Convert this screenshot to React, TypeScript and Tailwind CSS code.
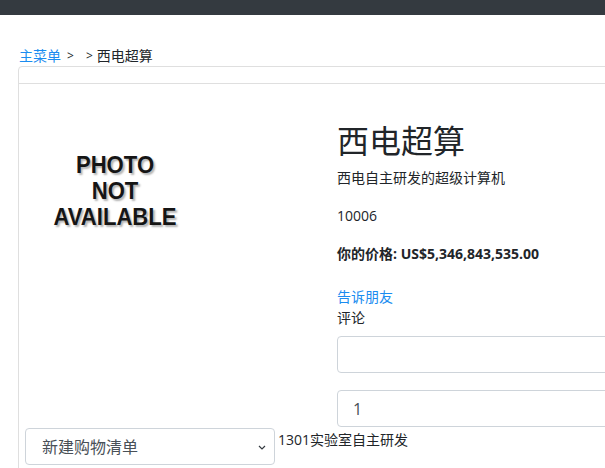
export default function App() {
  return (
    <div
      className="relative h-[468px] w-[605px] overflow-hidden bg-white text-[14px] text-[#212529]"
      style={{ fontFamily: '"Open Sans", "Noto Sans CJK SC", sans-serif' }}
    >
      <div className="h-[15px] bg-[#343a40]" />

      <nav className="mt-[30px] flex h-[21px] items-center whitespace-nowrap pl-[19px] leading-[21px]">
        <a className="text-[#1a8cf0]">主菜单</a>
        <span className="ml-[6px] text-[12px]">&gt;</span>
        <span className="ml-[12px] text-[12px]">&gt;</span>
        <span className="ml-[4px]">西电超算</span>
      </nav>

      <div className="ml-[18px] w-[760px] rounded-[4px] border border-[#dfdfdf]">
        <div className="h-[17px] border-b border-[#dfdfdf]" />

        <div className="flex">
          <div className="w-[318px] shrink-0">
            <div
              className="ml-[6px] mt-[68px] w-[180px] origin-center scale-x-[0.92] text-center text-[24px] font-bold leading-[26px] text-[#151515]"
              style={{
                fontFamily: '"Liberation Sans", Arial, sans-serif',
                textShadow: "2px 2px 2px rgba(0,0,0,0.3)",
              }}
            >
              <div>PHOTO</div>
              <div>NOT</div>
              <div>AVAILABLE</div>
            </div>
          </div>

          <div className="flex-1 pt-[38px]">
            <h1 className="text-[32px] leading-[38px]">西电超算</h1>
            <p className="mt-[8px] leading-[20px]">西电自主研发的超级计算机</p>
            <p className="mt-[18px] leading-[20px]">10006</p>
            <p className="mt-[18px] font-bold leading-[20px]">你的价格: US$5,346,843,535.00</p>
            <a className="mt-[22px] block leading-[21px] text-[#1a8cf0]">告诉朋友</a>
            <div className="leading-[21px]">评论</div>
            <input
              className="mt-[8px] block h-[37px] w-[400px] rounded-[4px] border border-[#ced4da] px-3 text-[16px] text-[#495057] outline-none"
              defaultValue=""
            />
            <input
              className="mt-[17px] block h-[37px] w-[400px] rounded-[4px] border border-[#ced4da] px-[15px] text-[16px] text-[#495057] outline-none"
              defaultValue="1"
            />
          </div>
        </div>

        <div className="flex items-start pb-[10px]">
          <div className="relative ml-[6px] mt-px">
            <select
              className="block h-[37px] w-[250px] appearance-none rounded-[4px] border border-[#ced4da] bg-white pl-[16px] pr-8 text-[16px] text-[#495057] outline-none"
              defaultValue="new"
            >
              <option value="new">新建购物清单</option>
            </select>
            <svg
              className="pointer-events-none absolute right-[9px] top-[17px]"
              width="8"
              height="5"
              viewBox="0 0 8 5"
              fill="none"
              stroke="#343a40"
              strokeWidth="1.2"
            >
              <path d="M1 1l3 3 3-3" />
            </svg>
          </div>
          <span className="ml-[3px] mt-[3px] leading-[20px]">1301实验室自主研发</span>
        </div>
      </div>
    </div>
  );
}
